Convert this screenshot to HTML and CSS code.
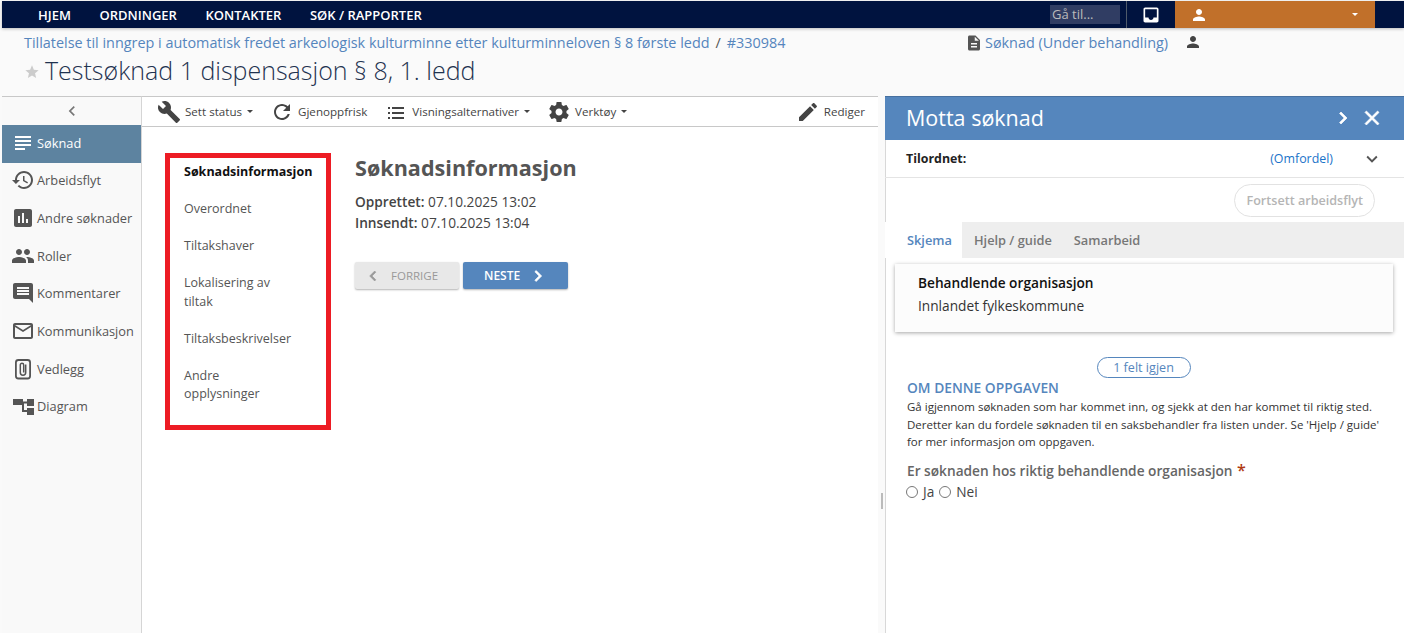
FILE: index.html
```html
<!DOCTYPE html>
<html lang="no">
<head>
<meta charset="utf-8">
<title>Motta søknad</title>
<link rel="stylesheet" href="styles.css">
</head>
<body>
<svg class="sprite" xmlns="http://www.w3.org/2000/svg">
<symbol id="i-build" viewBox="0 0 24 24"><path d="M22.7 19l-9.1-9.1c.9-2.3.4-5-1.5-6.9-2-2-5-2.4-7.4-1.3L9 6 6 9 1.6 4.7C.4 7.1.9 10.1 2.9 12.1c1.9 1.9 4.6 2.4 6.9 1.5l9.1 9.1c.4.4 1 .4 1.4 0l2.3-2.3c.5-.4.5-1.1.1-1.4z"/></symbol>
<symbol id="i-refresh" viewBox="0 0 24 24"><path d="M17.65 6.35C16.2 4.9 14.21 4 12 4c-4.42 0-7.99 3.58-7.99 8s3.57 8 7.99 8c3.73 0 6.84-2.55 7.73-6h-2.08c-.82 2.33-3.04 4-5.65 4-3.31 0-6-2.69-6-6s2.69-6 6-6c1.66 0 3.14.69 4.22 1.78L13 11h7V4l-2.35 2.35z"/></symbol>
<symbol id="i-list" viewBox="0 0 24 24"><path d="M4 14h2v-2H4v2zm0 5h2v-2H4v2zM4 9h2V7H4v2zm4 5h12v-2H8v2zm0 5h12v-2H8v2zM8 7v2h12V7H8z"/></symbol>
<symbol id="i-gear" viewBox="0 0 24 24"><path d="M19.43 12.98c.04-.32.07-.64.07-.98s-.03-.66-.07-.98l2.11-1.65c.19-.15.24-.42.12-.64l-2-3.46c-.12-.22-.39-.3-.61-.22l-2.49 1c-.52-.4-1.08-.73-1.69-.98l-.38-2.65C14.46 2.18 14.25 2 14 2h-4c-.25 0-.46.18-.49.42l-.38 2.65c-.61.25-1.17.59-1.69.98l-2.49-1c-.23-.09-.49 0-.61.22l-2 3.46c-.13.22-.07.49.12.64l2.11 1.65c-.04.32-.07.65-.07.98s.03.66.07.98l-2.11 1.65c-.19.15-.24.42-.12.64l2 3.46c.12.22.39.3.61.22l2.49-1c.52.4 1.08.73 1.69.98l.38 2.65c.03.24.24.42.49.42h4c.25 0 .46-.18.49-.42l.38-2.65c.61-.25 1.17-.59 1.69-.98l2.49 1c.23.09.49 0 .61-.22l2-3.46c.12-.22.07-.49-.12-.64l-2.11-1.65zM12 15.5c-1.93 0-3.5-1.57-3.5-3.5s1.57-3.5 3.5-3.5 3.5 1.57 3.5 3.5-1.57 3.5-3.5 3.5z"/></symbol>
<symbol id="i-edit" viewBox="0 0 24 24"><path d="M3 17.25V21h3.75L17.81 9.94l-3.75-3.75L3 17.25zM20.71 7.04c.39-.39.39-1.02 0-1.41l-2.34-2.34c-.39-.39-1.02-.39-1.41 0l-1.83 1.83 3.75 3.75 1.83-1.83z"/></symbol>
<symbol id="i-subject" viewBox="0 0 24 24"><path d="M14 17H4v2h10v-2zm6-8H4v2h16V9zM4 15h16v-2H4v2zM4 5v2h16V5H4z"/></symbol>
<symbol id="i-history" viewBox="0 0 24 24"><path d="M13 3c-4.97 0-9 4.03-9 9H1l3.89 3.89.07.14L9 12H6c0-3.87 3.13-7 7-7s7 3.13 7 7-3.13 7-7 7c-1.93 0-3.68-.79-4.94-2.06l-1.42 1.42C8.27 19.99 10.51 21 13 21c4.97 0 9-4.03 9-9s-4.03-9-9-9zm-1 5v5l4.28 2.54.72-1.21-3.5-2.08V8H12z"/></symbol>
<symbol id="i-chart" viewBox="0 0 24 24"><path d="M19 3H5c-1.1 0-2 .9-2 2v14c0 1.1.9 2 2 2h14c1.1 0 2-.9 2-2V5c0-1.1-.9-2-2-2zM9 17H7v-7h2v7zm4 0h-2V7h2v10zm4 0h-2v-4h2v4z"/></symbol>
<symbol id="i-people" viewBox="0 0 24 24"><path d="M16 11c1.66 0 2.99-1.34 2.99-3S17.66 5 16 5c-1.66 0-3 1.34-3 3s1.34 3 3 3zm-8 0c1.66 0 2.99-1.34 2.99-3S9.66 5 8 5C6.34 5 5 6.34 5 8s1.34 3 3 3zm0 2c-2.33 0-7 1.17-7 3.5V19h14v-2.5c0-2.33-4.67-3.5-7-3.5zm8 0c-.29 0-.62.02-.97.05 1.16.84 1.97 1.97 1.97 3.45V19h6v-2.5c0-2.33-4.67-3.5-7-3.5z"/></symbol>
<symbol id="i-comment" viewBox="0 0 24 24"><path d="M21.99 4c0-1.1-.89-2-1.99-2H4c-1.1 0-2 .9-2 2v12c0 1.1.9 2 2 2h14l4 4-.01-18zM18 14H6v-2h12v2zm0-3H6V9h12v2zm0-3H6V6h12v2z"/></symbol>
<symbol id="i-mail" viewBox="0 0 24 24"><path d="M20 4H4c-1.1 0-1.99.9-1.99 2L2 18c0 1.1.9 2 2 2h16c1.1 0 2-.9 2-2V6c0-1.1-.9-2-2-2zm0 14H4V8l8 5 8-5v10zm0-12l-8 5-8-5h16z"/></symbol>
<symbol id="i-attach" viewBox="0 0 24 24"><rect x="4.900" y="3" width="14.200" height="18.500" rx="2.500" fill="none" stroke="currentColor" stroke-width="1.800"/><path d="M14.700 7.500v8a2.700 2.700 0 0 1-5.400 0V8a1.700 1.700 0 0 1 3.400 0v7.500" fill="none" stroke="currentColor" stroke-width="1.500"/></symbol>
<symbol id="i-tree" viewBox="0 0 24 24"><path d="M2 5h10v2.500h4V5h7v7h-7V9.500h-3V16h3v-2h7v7h-7v-3h-5V11H2z"/></symbol>
<symbol id="i-inbox" viewBox="0 0 24 24"><path d="M19 3H4.990c-1.110 0-1.980.89-1.980 2L3 19c0 1.100.88 2 1.990 2H19c1.100 0 2-.9 2-2V5c0-1.110-.9-2-2-2zm0 12h-4c0 1.660-1.350 3-3 3s-3-1.340-3-3H4.990V5H19v10z"/></symbol>
<symbol id="i-person" viewBox="0 0 24 24"><path d="M12 12c2.210 0 4-1.790 4-4s-1.790-4-4-4-4 1.790-4 4 1.790 4 4 4zm0 2c-2.670 0-8 1.340-8 4v2h16v-2c0-2.660-5.330-4-8-4z"/></symbol>
<symbol id="i-doc" viewBox="0 0 24 24"><path d="M14 2H6c-1.100 0-1.990.9-1.990 2L4 20c0 1.100.89 2 1.990 2H18c1.100 0 2-.9 2-2V8l-6-6zm2 16H8v-2h8v2zm0-4H8v-2h8v2zm-3-5V3.500L18.500 9H13z"/></symbol>
<symbol id="i-star" viewBox="0 0 24 24"><path d="M12 17.270L18.180 21l-1.640-7.030L22 9.240l-7.190-.61L12 2 9.190 8.630 2 9.240l5.460 4.730L5.820 21z"/></symbol>
<symbol id="i-left" viewBox="0 0 24 24"><path d="M15.410 7.410L14 6l-6 6 6 6 1.410-1.410L10.830 12z"/></symbol>
<symbol id="i-right" viewBox="0 0 24 24"><path d="M10 6L8.590 7.410 13.170 12l-4.580 4.590L10 18l6-6z"/></symbol>
<symbol id="i-down" viewBox="0 0 24 24"><path d="M16.590 8.590L12 13.170 7.410 8.590 6 10l6 6 6-6z"/></symbol>
<symbol id="i-close" viewBox="0 0 24 24"><path d="M19 6.410L17.590 5 12 10.590 6.410 5 5 6.410 10.590 12 5 17.590 6.410 19 12 13.410 17.590 19 19 17.590 13.410 12z"/></symbol>
</svg>

<nav class="topnav">
  <ul class="topnav-menu">
    <li>HJEM</li>
    <li>ORDNINGER</li>
    <li>KONTAKTER</li>
    <li>SØK / RAPPORTER</li>
  </ul>
  <div class="goto">Gå til...</div>
  <div class="inbox"><svg class="ic ic-20"><use href="#i-inbox"/></svg></div>
  <div class="user">
    <svg class="ic ic-18"><use href="#i-person"/></svg>
    <span class="caret caret-white"></span>
  </div>
</nav>

<header class="pagehead">
  <div class="crumbs">
    <div class="crumb-left"><span class="link">Tillatelse til inngrep i automatisk fredet arkeologisk kulturminne etter kulturminneloven § 8 første ledd</span><span class="slash">/</span><span class="link">#330984</span></div>
    <div class="crumb-right">
      <svg class="ic ic-18"><use href="#i-doc"/></svg>
      <span class="link">Søknad (Under behandling)</span>
      <svg class="ic ic-18 crumb-person"><use href="#i-person"/></svg>
    </div>
  </div>
  <h1 class="title"><svg class="ic ic-16 star"><use href="#i-star"/></svg>Testsøknad 1 dispensasjon § 8, 1. ledd</h1>
</header>

<div class="workspace">
  <aside class="sidebar">
    <div class="collapse"><svg class="ic ic-20"><use href="#i-left"/></svg></div>
    <a class="side-item active"><svg class="ic ic-24"><use href="#i-subject"/></svg>Søknad</a>
    <a class="side-item"><svg class="ic ic-24"><use href="#i-history"/></svg>Arbeidsflyt</a>
    <a class="side-item"><svg class="ic ic-24"><use href="#i-chart"/></svg>Andre søknader</a>
    <a class="side-item"><svg class="ic ic-24"><use href="#i-people"/></svg>Roller</a>
    <a class="side-item"><svg class="ic ic-24"><use href="#i-comment"/></svg>Kommentarer</a>
    <a class="side-item"><svg class="ic ic-24"><use href="#i-mail"/></svg>Kommunikasjon</a>
    <a class="side-item"><svg class="ic ic-24"><use href="#i-attach"/></svg>Vedlegg</a>
    <a class="side-item"><svg class="ic ic-24"><use href="#i-tree"/></svg>Diagram</a>
  </aside>

  <main class="center">
    <div class="toolbar">
      <span class="tool"><svg class="ic ic-24"><use href="#i-build"/></svg>Sett status<span class="caret"></span></span>
      <span class="tool"><svg class="ic ic-24"><use href="#i-refresh"/></svg>Gjenoppfrisk</span>
      <span class="tool"><svg class="ic ic-24"><use href="#i-list"/></svg>Visningsalternativer<span class="caret"></span></span>
      <span class="tool"><svg class="ic ic-24"><use href="#i-gear"/></svg>Verktøy<span class="caret"></span></span>
      <span class="tool tool-end"><svg class="ic ic-24"><use href="#i-edit"/></svg>Rediger</span>
    </div>
    <div class="content">
      <ul class="sections">
        <li class="current">Søknadsinformasjon</li>
        <li>Overordnet</li>
        <li>Tiltakshaver</li>
        <li>Lokalisering av tiltak</li>
        <li>Tiltaksbeskrivelser</li>
        <li>Andre opplysninger</li>
      </ul>
      <section class="details">
        <h2>Søknadsinformasjon</h2>
        <p><b>Opprettet:</b> 07.10.2025 13:02</p>
        <p><b>Innsendt:</b> 07.10.2025 13:04</p>
        <div class="pager">
          <span class="btn btn-off"><svg class="ic ic-20 bold"><use href="#i-left"/></svg>FORRIGE</span>
          <span class="btn btn-on">NESTE<svg class="ic ic-22 bold"><use href="#i-right"/></svg></span>
        </div>
      </section>
    </div>
  </main>

  <div class="gutter"><span class="grip"></span></div>

  <aside class="panel">
    <div class="panel-head">
      <span class="panel-title">Motta søknad</span>
      <svg class="ic ic-24 bold"><use href="#i-right"/></svg>
      <svg class="ic ic-24 bold"><use href="#i-close"/></svg>
    </div>
    <div class="assigned">
      <b>Tilordnet:</b>
      <span class="omfordel">(Omfordel)</span>
      <svg class="ic ic-22"><use href="#i-down"/></svg>
    </div>
    <div class="actions"><span class="continue">Fortsett arbeidsflyt</span></div>
    <div class="tabs">
      <span class="tab tab-on">Skjema</span>
      <span class="tab">Hjelp / guide</span>
      <span class="tab">Samarbeid</span>
    </div>
    <div class="card">
      <h3>Behandlende organisasjon</h3>
      <p>Innlandet fylkeskommune</p>
    </div>
    <div class="remaining"><span>1 felt igjen</span></div>
    <div class="task">
      <h4>OM DENNE OPPGAVEN</h4>
      <p>Gå igjennom søknaden som har kommet inn, og sjekk at den har kommet til riktig sted. Deretter kan du fordele søknaden til en saksbehandler fra listen under. Se 'Hjelp / guide' for mer informasjon om oppgaven.</p>
      <div class="question">Er søknaden hos riktig behandlende organisasjon <span class="req">*</span></div>
      <div class="radios">
        <span class="radio"></span><span>Ja</span><span class="radio"></span><span>Nei</span>
      </div>
    </div>
  </aside>
</div>
</body>
</html>
```

FILE: styles.css
```css
* { box-sizing: border-box; }
html, body { height: 100%; }
body {
  margin: 0;
  padding: 1px 0 0 2px;
  height: 633px;
  overflow: hidden;
  display: flex;
  flex-direction: column;
  background: #fafafa;
  font-family: "Open Sans", sans-serif;
  font-size: 12.8px;
  color: #555;
}
h1, h2, h3, h4, p, ul { margin: 0; padding: 0; }
ul { list-style: none; }
.sprite { display: none; }
.ic { fill: currentColor; flex: none; display: block; }
.bold { stroke: currentColor; stroke-width: .7; }
.ic-16 { width: 16px; height: 16px; }
.ic-18 { width: 18px; height: 18px; }
.ic-20 { width: 20px; height: 20px; }
.ic-22 { width: 22px; height: 22px; }
.ic-24 { width: 24px; height: 24px; }
.link { color: #5585bd; }
.caret {
  display: inline-block;
  width: 0; height: 0;
  margin-left: 5px;
  border-left: 3px solid transparent;
  border-right: 3px solid transparent;
  border-top: 3px solid #444;
}
.caret-white { border-top-color: #fff; }

/* top navigation */
.topnav {
  height: 27px;
  flex: none;
  display: flex;
  align-items: stretch;
  background: #00133f;
  color: #fff;
  box-shadow: 0 1px 3px rgba(0,0,0,.25);
  position: relative;
}
.topnav-menu {
  flex: 1;
  display: flex;
  align-items: center;
  gap: 28.600px;
  padding-left: 36px;
  font-size: 13px;
  font-weight: 600;
}
.goto {
  width: 70px;
  height: 19px;
  margin-top: 4px;
  padding-left: 2px;
  background: #303d63;
  color: #bbb;
  font-size: 13px;
  line-height: 19px;
}
.inbox {
  width: 49px;
  margin-left: 6px;
  border-left: 1px solid #4e5a6a;
  display: flex;
  align-items: center;
  justify-content: center;
}
.user {
  width: 200px;
  padding: 0 17px 0 15px;
  background: #c1702a;
  display: flex;
  align-items: center;
  justify-content: space-between;
  margin-right: 29px;
}

/* page heading */
.pagehead {
  height: 68px;
  flex: none;
  padding: 5px 0 0 22px;
}
.crumbs { display: flex; font-size: 14.4px; line-height: 20px; }
.crumb-left { width: 941px; }
.slash { margin: 0 6px; color: #555; }
.crumb-right { display: flex; align-items: center; gap: 2px; }
.crumb-person { margin: -2px 0 0 14px; color: #444; }
.title {
  display: flex;
  align-items: center;
  margin-top: 1px;
  font-size: 25px;
  font-weight: 300;
  line-height: 33px;
  color: #1f3350;
}
.star { color: #ccc; margin: 2px 5px 0 0; }

/* work area */
.workspace {
  flex: 1;
  min-height: 0;
  display: flex;
}
.sidebar {
  width: 140px;
  flex: none;
  background: #f9f9f9;
  border-top: 1px solid #c8c8c8;
  border-right: 1px solid #d5d5d5;
}
.collapse {
  height: 28px;
  display: flex;
  align-items: center;
  justify-content: center;
  color: #777;
}
.side-item {
  height: 37.700px;
  padding: 0 0 3px 9px;
  display: flex;
  align-items: center;
  gap: 2px;
  color: #555;
}
.side-item.active { background: #5d83a0; color: #fff; height: 38px; }

.center {
  width: 736px;
  flex: none;
  display: flex;
  flex-direction: column;
  background: #fff;
  border-top: 1px solid #c8c8c8;
}
.toolbar {
  height: 30px;
  flex: none;
  display: flex;
  align-items: center;
  padding-left: 15px;
  gap: 17px;
  border-bottom: 1px solid #c8c8c8;
  font-size: 11.6px;
  color: #444;
}
.tool { display: flex; align-items: center; gap: 4px; }
.tool .caret { margin-left: 1px; }
.tool-end { margin-left: auto; padding-right: 13px; }
.content { display: flex; padding: 26px 0 0 23px; }
.sections {
  width: 166px;
  height: 277px;
  flex: none;
  padding: 5px 42px 0 14px;
  border: 5px solid #ed1c24;
  color: #555;
  font-size: 12.5px;
  line-height: 18.500px;
}
.sections li { margin-bottom: 18.500px; }
.sections .current { font-weight: 700; color: #111; white-space: nowrap; }
.details { padding: 1px 0 0 24px; font-size: 13.7px; line-height: 21px; color: #444; }
.details h2 {
  font-size: 21.6px;
  line-height: 28px;
  font-weight: 700;
  color: #555;
  margin-bottom: 9px;
}
.details b { font-weight: 600; }
.pager { display: flex; gap: 4px; margin-top: 29px; }
.btn {
  width: 104px;
  height: 27px;
  display: flex;
  align-items: center;
  border-radius: 2px;
  font-size: 11.5px;
  box-shadow: 0 1px 2px rgba(0,0,0,.3);
}
.btn-off { padding-left: 8px; gap: 8px; background: #e8e8e8; color: #999; }
.btn-on { width: 105px; padding-left: 21px; gap: 7px; background: #5586bd; color: #fff; font-weight: 600; font-size: 12px; }

.gutter {
  width: 7px;
  flex: none;
  display: flex;
  flex-direction: column;
  justify-content: center;
  align-items: center;
  padding-top: 272px;
}
.grip { width: 2px; height: 16px; background: #bbb; }

.panel { flex: 1; min-width: 0; background: #fff; box-shadow: inset 1px 0 #d8d8d8; }
.panel-head {
  height: 44px;
  display: flex;
  align-items: center;
  padding: 0 20px 2px 21px;
  background: #5586bd;
  border-top: 1px solid #47709f;
  color: #fff;
  gap: 5px;
}
.panel-title { flex: 1; font-size: 21.5px; }
.assigned {
  height: 38px;
  display: flex;
  align-items: center;
  padding: 0 21px 0 21px;
  border-bottom: 1px solid #e4e4e4;
  font-size: 12.4px;
}
.assigned b { flex: 1; color: #222; font-weight: 700; }
.omfordel { color: #1a73c9; margin-right: 28px; font-size: 12.4px; }
.assigned .ic { color: #555; }
.actions { height: 44px; display: flex; align-items: center; justify-content: flex-end; padding-right: 29px; }
.continue {
  height: 33px;
  padding: 0 11px;
  display: flex;
  align-items: center;
  border: 1px solid #e2e2e2;
  border-radius: 17px;
  color: #b5b5b5;
  font-size: 12.6px;
  font-weight: 600;
}
.tabs {
  height: 36px;
  display: flex;
  background: #eee;
  font-size: 12.8px;
  font-weight: 600;
  color: #777;
}
.tab { padding: 0 10px 0 12px; display: flex; align-items: center; }
.tab-on { background: #fff; color: #5586bd; padding: 0 10px 0 22px; }
.card {
  height: 68px;
  margin: 6px 11px 0 10px;
  padding: 7px 23px;
  background: #fcfcfc;
  box-shadow: 0 1px 4px rgba(0,0,0,.35);
  font-size: 13.7px;
  line-height: 23px;
  color: #333;
}
.card h3 { font-size: 13.7px; font-weight: 600; color: #111; }
.remaining { margin-top: 25px; padding-right: 2px; display: flex; justify-content: center; }
.remaining span {
  width: 94px;
  height: 21px;
  line-height: 19px;
  text-align: center;
  border: 1px solid #5586bd;
  border-radius: 11px;
  color: #5586bd;
  font-size: 12.6px;
}
.task { padding: 1px 21px 0 22px; color: #444; }
.task h4 { font-size: 13.8px; line-height: 18px; font-weight: 600; color: #5586bd; }
.task p { margin-top: 1px; font-size: 11.500px; line-height: 17.500px; color: #333; }
.question { margin-top: 10px; font-size: 13.700px; line-height: 20px; font-weight: 600; color: #666; }
.req { color: #b03a12; margin-left: 1px; font-size: 16px; line-height: 16px; }
.radios { display: flex; align-items: center; gap: 5px; margin: 1px 0 0 -1px; font-size: 13.700px; line-height: 20px; }
.radio { width: 12px; height: 12px; border: 1px solid #777; border-radius: 50%; background: #fff; }
```
